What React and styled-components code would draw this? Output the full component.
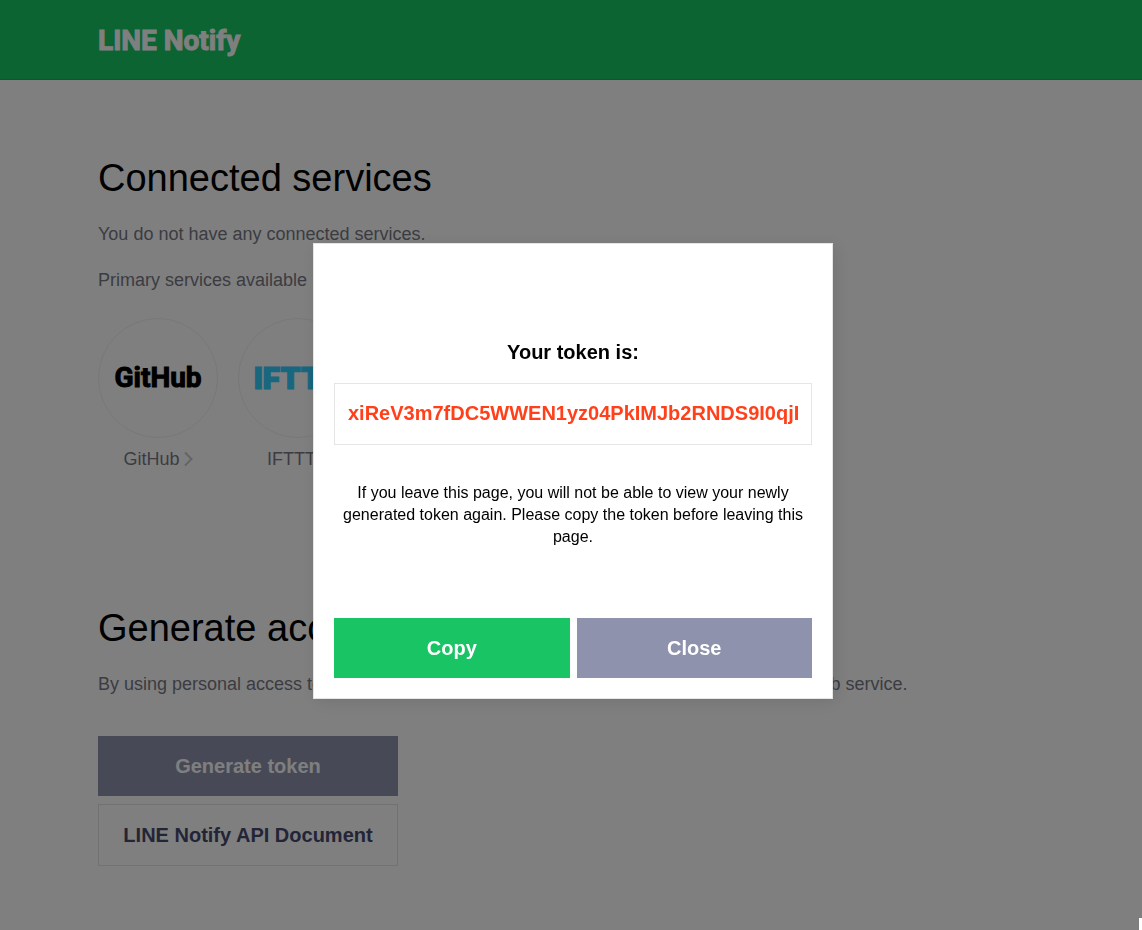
import React from "react";
import styled, { createGlobalStyle } from "styled-components";

const Global = createGlobalStyle`
  *, *::before, *::after { box-sizing: border-box; }
  body {
    margin: 0;
    background: #fff;
    color: #000;
    font-family: "Liberation Sans", Arial, sans-serif;
  }
  h1, h2, p, ul { margin: 0; padding: 0; }
`;

const Page = styled.div`
  min-height: 100vh;
`;

const Header = styled.header`
  height: 80px;
  padding: 1px 24px 0;
  background: #18c864;
  border-bottom: 1px solid #14b058;
`;

const Container = styled.div`
  max-width: 946px;
  margin: 0 auto;
`;

const Brand = styled.a`
  display: inline-block;
  font: 700 28px/80px Roboto, sans-serif;
  color: #fff;
  -webkit-text-stroke: 1px #fff;
  text-decoration: none;
`;

const Main = styled.main`
  padding: 75px 24px 64px;
`;

const Section = styled.section`
  margin-bottom: ${(p) => p.$gap || 0}px;
`;

const Heading = styled.h1`
  && { margin-bottom: 21px; }
  font-size: 38px;
  font-weight: 400;
  line-height: 46px;
`;

const Text = styled.p`
  && { margin-bottom: ${(p) => p.$gap}px; }
  font-size: 18px;
  line-height: 24px;
  color: #777985;
`;

const Services = styled.ul`
  display: flex;
  gap: 20px;
  list-style: none;
`;

const ServiceLink = styled.a`
  display: flex;
  flex-direction: column;
  align-items: center;
  gap: 9px;
  width: 120px;
  font-size: 18px;
  line-height: 24px;
  color: #777985;
  text-decoration: none;
`;

const Circle = styled.span`
  display: flex;
  align-items: center;
  justify-content: center;
  width: 120px;
  height: 120px;
  border: 1px solid #f0f0f0;
  border-radius: 50%;
`;

const GitHubMark = styled.span`
  font: 700 28px/32px Roboto, sans-serif;
  color: #000;
  -webkit-text-stroke: 1px #000;
`;

const IftttMark = styled.span`
  font: 900 30px/32px Inter, sans-serif;
  color: #33ccff;
  -webkit-text-stroke: 1px #33ccff;
`;

const ServiceName = styled.span`
  display: flex;
  align-items: center;
  gap: 4px;
`;

const Actions = styled.div`
  display: flex;
  flex-direction: column;
  gap: 8px;
  max-width: 300px;
`;

const Button = styled.button`
  flex: 1 1 0;
  height: 60px;
  padding: 0;
  border: 0;
  background: ${(p) => (p.$primary ? "#18c464" : "#8f92ac")};
  color: #fff;
  font: 700 20px/24px "Liberation Sans", Arial, sans-serif;
  cursor: pointer;
`;

const WideButton = styled(Button)`
  flex: none;
`;

const DocLink = styled.a`
  height: 62px;
  border: 1px solid #e5e5e5;
  color: #464b6e;
  font-size: 20px;
  font-weight: 700;
  line-height: 60px;
  text-align: center;
  text-decoration: none;
`;

const Overlay = styled.div`
  position: fixed;
  inset: 0;
  display: flex;
  align-items: center;
  justify-content: center;
  padding: 12px 0 0 4px;
  background: rgba(0, 0, 0, 0.5);
`;

const Dialog = styled.div`
  width: 520px;
  max-width: 100%;
  padding: 96px 20px 20px;
  border: 1px solid #e5e5e5;
  background: #fff;
  box-shadow: 3px 3px 16px rgba(0, 0, 0, 0.1);
  text-align: center;
`;

const TokenLabel = styled.label`
  display: block;
  margin-bottom: 19px;
  font-size: 20px;
  font-weight: 700;
  line-height: 24px;
`;

const TokenInput = styled.input`
  display: block;
  width: 100%;
  height: 62px;
  padding: 0 12px 2px 13px;
  border: 1px solid #e5e5e5;
  border-radius: 0;
  outline: 0;
  background: #fff;
  color: #ff401a;
  font: 700 20px/24px "Liberation Sans", Arial, sans-serif;
`;

const Notice = styled.p`
  && { margin: 37px 0 70px; }
  font-size: 16px;
  line-height: 22px;
`;

const ButtonRow = styled.div`
  display: flex;
  gap: 7px;
`;

const Corner = styled.span`
  position: fixed;
  right: 0;
  bottom: 0;
  width: 3px;
  height: 12px;
  background: #fff;
`;

const Chevron = () => (
  <svg width="9" height="16" viewBox="0 0 9 16" fill="none" stroke="#c8c8c8" strokeWidth="2" aria-hidden="true">
    <path d="M1 1.5 7.5 8 1 14.5" />
  </svg>
);

const services = [
  { name: "GitHub", mark: <GitHubMark>GitHub</GitHubMark> },
  { name: "IFTTT", mark: <IftttMark>IFTTT</IftttMark> },
];

export default function App() {
  return (
    <>
      <Global />
      <Page>
        <Header>
          <Container>
            <Brand href="#">LINE Notify</Brand>
          </Container>
        </Header>
        <Main>
          <Container>
            <Section $gap={134}>
              <Heading>Connected services</Heading>
              <Text $gap={22}>You do not have any connected services.</Text>
              <Text $gap={26}>Primary services available</Text>
              <Services>
                {services.map((s) => (
                  <li key={s.name}>
                    <ServiceLink href="#">
                      <Circle>{s.mark}</Circle>
                      <ServiceName>
                        {s.name}
                        <Chevron />
                      </ServiceName>
                    </ServiceLink>
                  </li>
                ))}
              </Services>
            </Section>
            <Section>
              <Heading as="h2">Generate access token</Heading>
              <Text $gap={40}>
                By using personal access tokens, you can configure notifications without having to add a web service.
              </Text>
              <Actions>
                <WideButton type="button">Generate token</WideButton>
                <DocLink href="#">LINE Notify API Document</DocLink>
              </Actions>
            </Section>
          </Container>
        </Main>
      </Page>
      <Overlay>
        <Dialog role="dialog" aria-modal="true">
          <TokenLabel htmlFor="token">Your token is:</TokenLabel>
          <TokenInput id="token" readOnly value="xiReV3m7fDC5WWEN1yz04PkIMJb2RNDS9I0qjI" />
          <Notice>
            If you leave this page, you will not be able to view your newly generated token again. Please copy the
            token before leaving this page.
          </Notice>
          <ButtonRow>
            <Button type="button" $primary>Copy</Button>
            <Button type="button">Close</Button>
          </ButtonRow>
        </Dialog>
      </Overlay>
      <Corner />
    </>
  );
}
